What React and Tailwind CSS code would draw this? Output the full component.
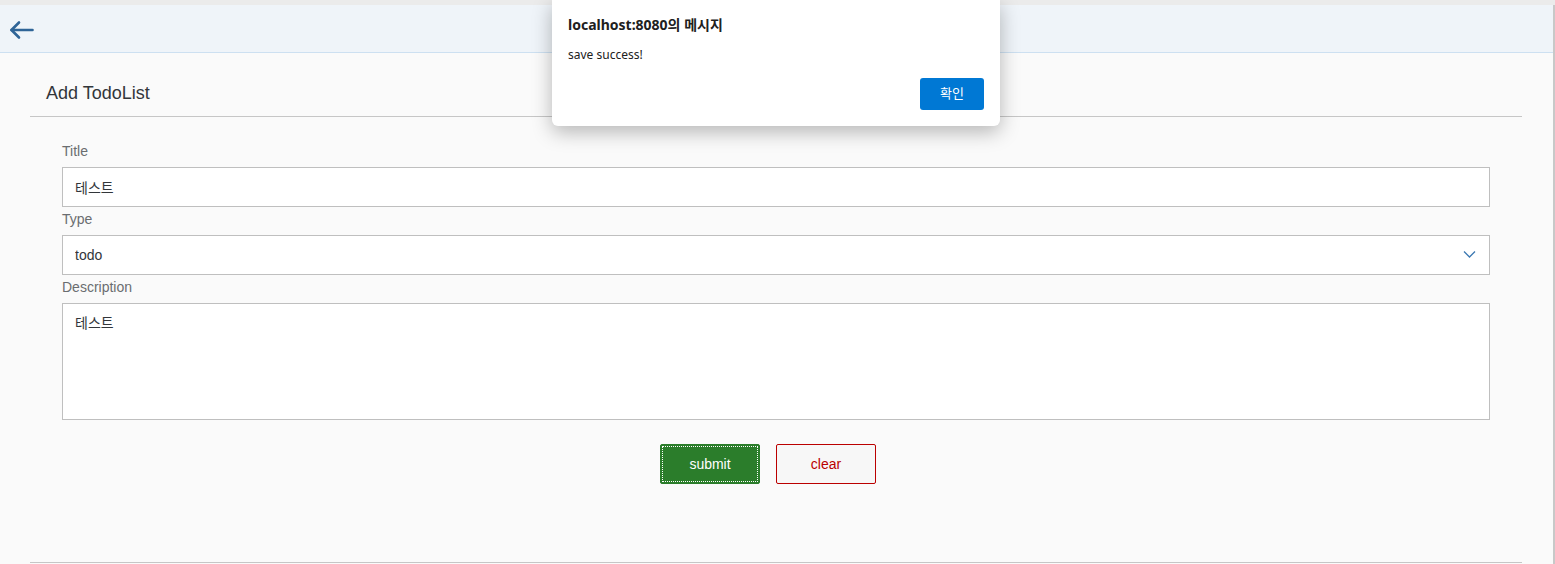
import React, { useState } from 'react';

const font = { fontFamily: '"Liberation Sans", "Noto Sans CJK KR", sans-serif' };

export default function App() {
  const [title, setTitle] = useState('테스트');
  const [type, setType] = useState('todo');
  const [desc, setDesc] = useState('테스트');

  return (
    <div className="relative min-h-[564px] w-[1555px] bg-[#fafafa] text-[#32363a]" style={font}>
      {/* top strip */}
      <div className="h-[5px] bg-[#ebebeb]" />
      <div className="border-r-[2px] border-[#c8c8c8] min-h-[559px]">
        {/* Header */}
        <div className="h-[48px] bg-[#eff4f9] border-b border-[#cde0f1] flex items-center pl-[9px] pt-[2px]">
          <button className="text-[#2f6497]">
            <svg width="26" height="22" viewBox="0 0 26 22" fill="none" stroke="currentColor" strokeWidth="2.6" strokeLinecap="round" strokeLinejoin="round">
              <path d="M2.5 11h21" />
              <path d="M10 3.5L2.5 11l7.5 7.5" />
            </svg>
          </button>
        </div>

        <div className="ml-[30px] mr-[31px]">
          <div className="h-[64px] flex items-start pl-[16px] pt-[29px] border-b border-[#c6c6c6]">
            <h1 className="text-[18px] leading-[22px] text-[#32363a]">Add TodoList</h1>
          </div>

          <form className="pl-[32px] pr-[32px] pt-[26px]" onSubmit={(e) => e.preventDefault()}>
            <label className="block text-[14px] text-[#6a6d70] leading-[16px] mb-[8px]">Title</label>
            <input
              value={title}
              onChange={(e) => setTitle(e.target.value)}
              className="block w-full h-[40px] border border-[#bfbfbf] bg-white px-[12px] text-[14px] text-[#32363a] outline-none"
            />
            <label className="block text-[14px] text-[#6a6d70] leading-[16px] mt-[4px] mb-[8px]">Type</label>
            <div className="relative">
              <select
                value={type}
                onChange={(e) => setType(e.target.value)}
                className="block w-full h-[40px] border border-[#bfbfbf] bg-white px-[12px] text-[14px] text-[#32363a] outline-none appearance-none"
              >
                <option value="todo">todo</option>
                <option value="done">done</option>
              </select>
              <svg className="absolute right-[14px] top-[15px] pointer-events-none" width="13" height="9" viewBox="0 0 13 9" fill="none" stroke="#3b78b2" strokeWidth="1.3">
                <path d="M1 1.5l5.5 5.5 5.5-5.5" />
              </svg>
            </div>
            <label className="block text-[14px] text-[#6a6d70] leading-[16px] mt-[4px] mb-[8px]">Description</label>
            <textarea
              value={desc}
              onChange={(e) => setDesc(e.target.value)}
              className="block w-full h-[117px] border border-[#bfbfbf] bg-white px-[12px] py-[9px] text-[14px] text-[#32363a] outline-none resize-none"
            />

            <div className="flex justify-center gap-[16px] mt-[24px] pr-[16px]">
              <button className="w-[100px] h-[40px] rounded-[2px] bg-[#2b7d2b] border border-[#2b7d2b] text-white text-[14px] font-medium outline outline-1 outline-dotted outline-white -outline-offset-[3px]">
                submit
              </button>
              <button type="button" className="w-[100px] h-[40px] rounded-[2px] bg-[#f7f7f7] border border-[#bb0000] text-[#bb0000] text-[14px]">
                clear
              </button>
            </div>
          </form>

          <div className="mt-[78px] border-b border-[#c6c6c6]" />
        </div>
      </div>

      {/* Alert dialog */}
      <div
        className="absolute left-[552px] top-0 w-[448px] h-[126px] bg-white rounded-b-[6px] shadow-[0_6px_20px_rgba(0,0,0,0.28)] px-[16px] pt-[15px]"
        style={{ fontFamily: '"Noto Sans", "Noto Sans CJK KR", sans-serif' }}
      >
        <div className="text-[14px] font-bold text-[#202020] leading-[20px]">localhost:8080의 메시지</div>
        <div className="text-[12px] text-[#202020] mt-[12px] leading-[16px]">save success!</div>
        <div className="flex justify-end mt-[15px]">
          <button className="w-[64px] h-[32px] rounded-[3px] bg-[#0078d4] text-white text-[13px]">확인</button>
        </div>
      </div>
    </div>
  );
}
